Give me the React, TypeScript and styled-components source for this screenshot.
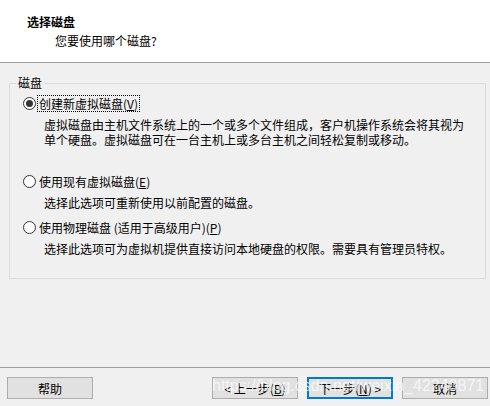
import { FC, ReactNode } from "react";
import styled, { createGlobalStyle } from "styled-components";

const GlobalStyle = createGlobalStyle`
  html, body {
    margin: 0;
    padding: 0;
    background: #f0f0f0;
  }
  body {
    font-family: "Noto Sans CJK SC", "Microsoft YaHei", sans-serif;
    font-size: 12px;
    color: #000;
  }
`;

const Window = styled.div`
  position: relative;
  width: 490px;
  height: 406px;
  display: flex;
  flex-direction: column;
  background: #f0f0f0;
  overflow: hidden;
`;

const Header = styled.div`
  height: 63px;
  box-sizing: border-box;
  background: #fff;
  border-bottom: 1px solid #a0a0a0;
  padding: 14px 0 0 27px;
`;

const Title = styled.div`
  font-weight: bold;
  line-height: 15px;
`;

const Subtitle = styled.div`
  margin: 4px 0 0 28px;
  line-height: 15px;
`;

const Main = styled.div`
  flex: 1;
  padding-top: 13px;
`;

const Group = styled.fieldset`
  margin: 0 4px 0 9px;
  padding: 0 0 22px 0;
  border: 1px solid #dcdcdc;
  min-width: 0;
`;

const Legend = styled.legend`
  margin-left: 6px;
  padding: 0 2px;
  line-height: 14px;
`;

const Option = styled.div<{ $top: number }>`
  margin-top: ${(p) => p.$top}px;
`;

const RadioRow = styled.div`
  display: flex;
  align-items: center;
  height: 17px;
  margin-left: 13px;
`;

const Radio = styled.span<{ $checked?: boolean }>`
  width: 13px;
  height: 13px;
  box-sizing: border-box;
  border: 1px solid #333;
  border-radius: 50%;
  background: #fff;
  display: flex;
  align-items: center;
  justify-content: center;
  flex-shrink: 0;

  &::after {
    content: "";
    width: 7px;
    height: 7px;
    border-radius: 50%;
    background: #333;
    display: ${(p) => (p.$checked ? "block" : "none")};
  }
`;

const RadioLabel = styled.span<{ $focused?: boolean }>`
  margin-left: 1px;
  height: 17px;
  box-sizing: border-box;
  display: flex;
  align-items: center;
  padding: 0 1px;
  line-height: 15px;
  border: 1px dotted ${(p) => (p.$focused ? "#000" : "transparent")};
`;

const Key = styled.span`
  text-decoration: underline;
`;

const Desc = styled.div`
  margin: 5px 0 0 34px;
  line-height: 15px;
`;

const Footer = styled.div`
  height: 39px;
  box-sizing: border-box;
  border-top: 1px solid #a0a0a0;
  display: flex;
  align-items: flex-start;
  padding: 9px 2px 0 7px;
`;

const Spacer = styled.div`
  flex: 1;
`;

const ButtonGroup = styled.div`
  display: flex;
  gap: 9px;
`;

const Button = styled.button<{ $primary?: boolean }>`
  width: 86px;
  height: 22px;
  box-sizing: border-box;
  padding: 0;
  background: #e1e1e1;
  border: ${(p) => (p.$primary ? "2px solid #0078d7" : "1px solid #adadad")};
  font-family: inherit;
  font-size: 12px;
  line-height: 15px;
  color: #000;
  display: flex;
  align-items: center;
  justify-content: center;
`;

const Watermark = styled.div`
  position: absolute;
  left: 212px;
  top: 377px;
  font-family: "Liberation Sans", Arial, sans-serif;
  font-size: 16px;
  line-height: 18px;
  color: rgba(255, 255, 255, 0.7);
  white-space: nowrap;
  pointer-events: none;
`;

type ChoiceProps = {
  top: number;
  checked?: boolean;
  focused?: boolean;
  label: ReactNode;
  children: ReactNode;
};

const Choice: FC<ChoiceProps> = ({ top, checked, focused, label, children }) => (
  <Option $top={top}>
    <RadioRow>
      <Radio $checked={checked} />
      <RadioLabel $focused={focused}>{label}</RadioLabel>
    </RadioRow>
    <Desc>{children}</Desc>
  </Option>
);

const App: FC = () => {
  return (
    <Window>
      <GlobalStyle />
      <Header>
        <Title>选择磁盘</Title>
        <Subtitle>您要使用哪个磁盘?</Subtitle>
      </Header>
      <Main>
        <Group>
          <Legend>磁盘</Legend>
          <Choice
            top={5}
            checked
            focused
            label={<>创建新虚拟磁盘(<Key>V</Key>)</>}
          >
            虚拟磁盘由主机文件系统上的一个或多个文件组成，客户机操作系统会将其视为
            <br />
            单个硬盘。虚拟磁盘可在一台主机上或多台主机之间轻松复制或移动。
          </Choice>
          <Choice top={26} label={<>使用现有虚拟磁盘(<Key>E</Key>)</>}>
            选择此选项可重新使用以前配置的磁盘。
          </Choice>
          <Choice top={9} label={<>使用物理磁盘 (适用于高级用户)(<Key>P</Key>)</>}>
            选择此选项可为虚拟机提供直接访问本地硬盘的权限。需要具有管理员特权。
          </Choice>
        </Group>
      </Main>
      <Footer>
        <Button>帮助</Button>
        <Spacer />
        <ButtonGroup>
          <Button>&lt; 上一步(<Key>B</Key>)</Button>
          <Button $primary>下一步(<Key>N</Key>) &gt;</Button>
          <Button>取消</Button>
        </ButtonGroup>
      </Footer>
      <Watermark>https://blog.csdn.net/weixin_42240871</Watermark>
    </Window>
  );
};

export default App;
